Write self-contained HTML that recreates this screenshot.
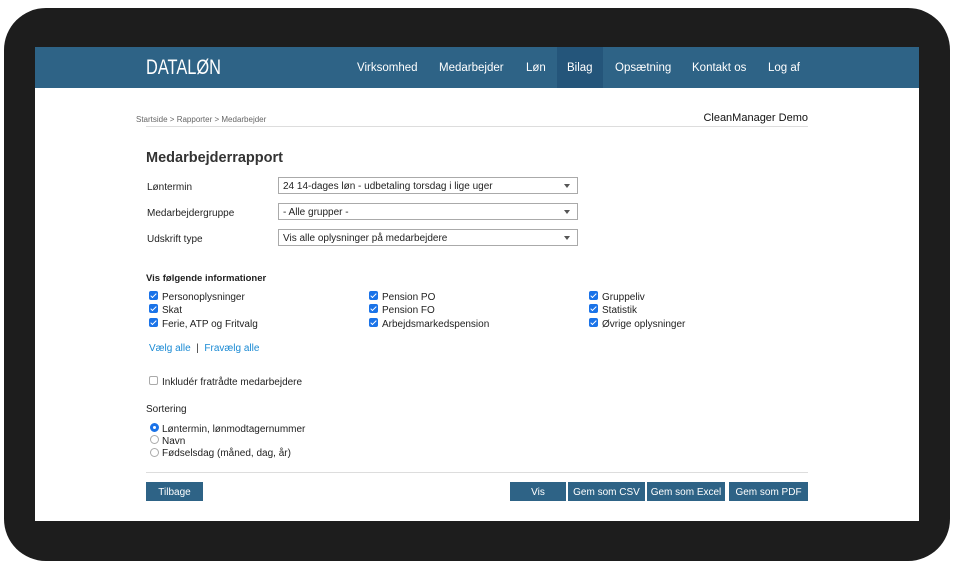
<!DOCTYPE html>
<html><head><meta charset="utf-8"><style>
*{margin:0;padding:0;box-sizing:border-box}
body{width:954px;height:567px;background:#fff;position:relative;font-family:"Liberation Sans",sans-serif;color:#222;overflow:hidden}
.frame{position:absolute;left:4px;top:8px;width:946px;height:553px;background:#1d1d1d;border-radius:42px}
.screen{position:absolute;left:35px;top:47px;width:884px;height:474px;background:#fff}
.nav{position:absolute;left:0;top:0;width:884px;height:41px;background:#2e6386}
.logo{position:absolute;left:111px;top:9px;color:#fff;font-size:21px;transform:scaleX(.78);transform-origin:left}
.nav a{position:absolute;top:1px;height:41px;line-height:41px;color:#fff;font-size:11.5px;text-decoration:none}
.a{position:absolute;font-size:10px;white-space:nowrap;margin-top:2px}
.sel{position:absolute;left:243px;width:300px;height:17px;border:1px solid #aaa;font-size:10px;line-height:17px;padding-left:4px}
.sel:after{content:"";position:absolute;right:7px;top:6px;border:3.5px solid transparent;border-top:4px solid #555}
.cb{position:absolute;width:9px;height:9px;background:#1a73e8;border-radius:2px}
.cb:after{content:"";position:absolute;left:3px;top:1px;width:2px;height:5px;border:solid #fff;border-width:0 1.5px 1.5px 0;transform:rotate(45deg)}
.rd{position:absolute;width:9px;height:9px;border:1px solid #aaa;border-radius:50%}
.btn{position:absolute;top:435px;height:19px;background:#2e6386;color:#fff;font-size:10px;line-height:21px;text-align:center}
</style></head><body>
<div class="frame"></div>
<div class="screen">
<div class="nav">
<div class="logo">DATALØN</div>
<a style="left:322px">Virksomhed</a>
<a style="left:404px">Medarbejder</a>
<a style="left:491px">Løn</a>
<div style="position:absolute;left:522px;top:0;width:46px;height:41px;background:#24557a"></div>
<a style="left:532px">Bilag</a>
<a style="left:580px">Opsætning</a>
<a style="left:657px">Kontakt os</a>
<a style="left:733px">Log af</a>
</div>
<div class="a" style="left:101px;top:66px;font-size:8px;color:#666">Startside &gt; Rapporter &gt; Medarbejder</div>
<div class="a" style="right:111px;top:63px;font-size:11px;color:#111">CleanManager Demo</div>
<div style="position:absolute;left:111px;top:79px;width:662px;height:1px;background:#ddd"></div>
<div class="a" style="left:111px;top:101px;font-size:14.5px;font-weight:bold;color:#333">Medarbejderrapport</div>
<div class="a" style="left:112px;top:133px">Løntermin</div>
<div class="a" style="left:112px;top:159px">Medarbejdergruppe</div>
<div class="a" style="left:112px;top:185px">Udskrift type</div>
<div class="sel" style="top:130px">24 14-dages løn - udbetaling torsdag i lige uger</div>
<div class="sel" style="top:156px">- Alle grupper -</div>
<div class="sel" style="top:182px">Vis alle oplysninger på medarbejdere</div>
<div class="a" style="left:111px;top:224px;font-weight:bold;font-size:9.5px">Vis følgende informationer</div>
<div class="cb" style="left:114px;top:244px"></div><div class="a" style="left:127px;top:243px">Personoplysninger</div>
<div class="cb" style="left:114px;top:257px"></div><div class="a" style="left:127px;top:256px">Skat</div>
<div class="cb" style="left:114px;top:271px"></div><div class="a" style="left:127px;top:270px">Ferie, ATP og Fritvalg</div>
<div class="cb" style="left:334px;top:244px"></div><div class="a" style="left:347px;top:243px">Pension PO</div>
<div class="cb" style="left:334px;top:257px"></div><div class="a" style="left:347px;top:256px">Pension FO</div>
<div class="cb" style="left:334px;top:271px"></div><div class="a" style="left:347px;top:270px">Arbejdsmarkedspension</div>
<div class="cb" style="left:554px;top:244px"></div><div class="a" style="left:567px;top:243px">Gruppeliv</div>
<div class="cb" style="left:554px;top:257px"></div><div class="a" style="left:567px;top:256px">Statistik</div>
<div class="cb" style="left:554px;top:271px"></div><div class="a" style="left:567px;top:270px">Øvrige oplysninger</div>
<div class="a" style="left:114px;top:294px;color:#1a8ad4">Vælg alle <span style="color:#333">&nbsp;|&nbsp;</span> Fravælg alle</div>
<div style="position:absolute;left:114px;top:329px;width:9px;height:9px;border:1px solid #aaa;border-radius:2px"></div>
<div class="a" style="left:127px;top:328px">Inkludér fratrådte medarbejdere</div>
<div class="a" style="left:111px;top:355px">Sortering</div>
<div class="rd" style="left:115px;top:376px;border:3px solid #1a73e8"></div><div class="a" style="left:127px;top:375px">Løntermin, lønmodtagernummer</div>
<div class="rd" style="left:115px;top:388px"></div><div class="a" style="left:127px;top:387px">Navn</div>
<div class="rd" style="left:115px;top:401px"></div><div class="a" style="left:127px;top:399px">Fødselsdag (måned, dag, år)</div>
<div style="position:absolute;left:111px;top:425px;width:662px;height:1px;background:#ddd"></div>
<div class="btn" style="left:111px;width:57px">Tilbage</div>
<div class="btn" style="left:475px;width:56px">Vis</div>
<div class="btn" style="left:533px;width:77px">Gem som CSV</div>
<div class="btn" style="left:612px;width:78px">Gem som Excel</div>
<div class="btn" style="left:694px;width:79px">Gem som PDF</div>
</div>
</body></html>
